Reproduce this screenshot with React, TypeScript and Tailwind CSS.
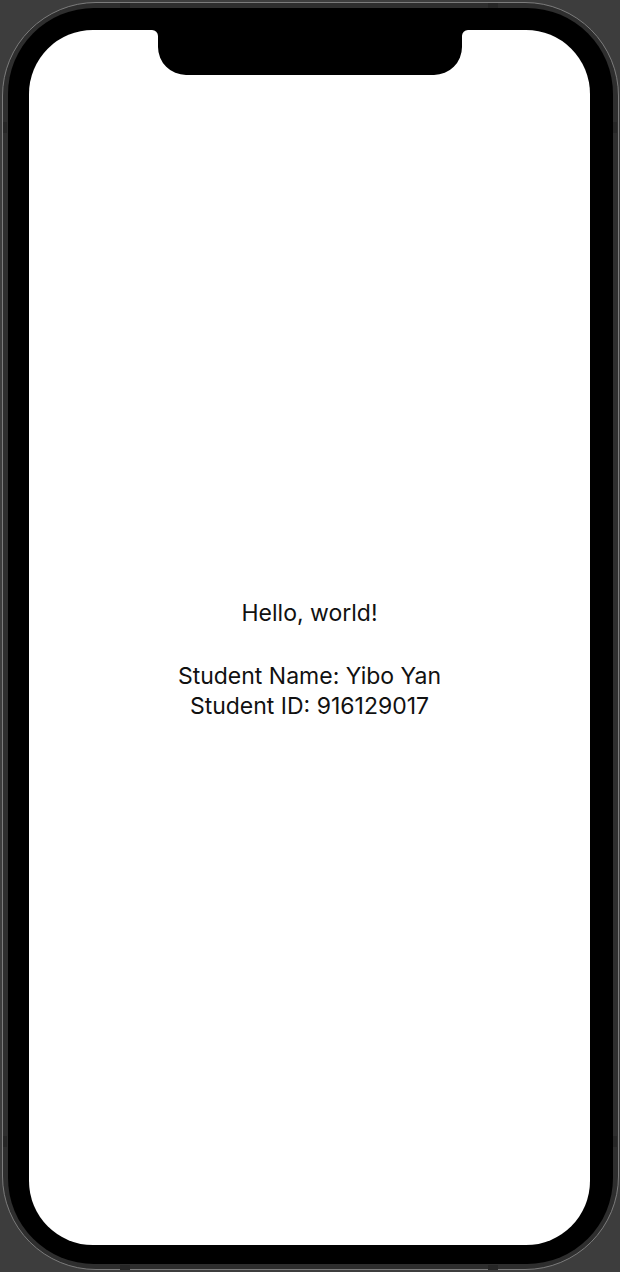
import React from "react";

// tiny darker marks on the steel rim (antenna bands)
const bands = [
  "left-[120px] top-[3px] w-[10px] h-[5px]",
  "left-[488px] top-[3px] w-[10px] h-[5px]",
  "left-[120px] top-[1265px] w-[10px] h-[5px]",
  "left-[488px] top-[1265px] w-[10px] h-[5px]",
  "left-[3px] top-[122px] w-[4px] h-[11px]",
  "left-[3px] top-[1136px] w-[4px] h-[11px]",
  "left-[613px] top-[122px] w-[4px] h-[11px]",
  "left-[613px] top-[1136px] w-[4px] h-[11px]",
];

function Notch() {
  return (
    <svg
      width="316"
      height="46"
      viewBox="0 0 316 46"
      className="absolute left-[123px] top-0"
    >
      <path
        d="M0 0 H316 A6 6 0 0 0 310 6 V17 A28 28 0 0 1 282 45 H34 A28 28 0 0 1 6 17 V6 A6 6 0 0 0 0 0 Z"
        fill="#000"
      />
    </svg>
  );
}

export default function App() {
  return (
    <div className="relative w-[620px] h-[1272px] bg-[#3d3d3d] pl-[2px] pt-[2px] pr-[1px] pb-[2px]">
      <div className="h-full rounded-[94px] border border-[#7c7c7c] bg-[#2e2e2e] p-[5px]">
        <div className="h-full rounded-[86px] bg-black pl-[21px] pt-[22px] pr-[23px] pb-[19px]">
          <div className="relative h-full rounded-[64px] bg-white">
            <Notch />
            <div
              className="flex flex-col items-center pt-[568px] text-[23px] leading-[30px] text-[#111]"
              style={{ fontFamily: "Inter, 'Liberation Sans', sans-serif" }}
            >
              <p>Hello, world!</p>
              <p className="mt-[33px]">Student Name: Yibo Yan</p>
              <p>Student ID: 916129017</p>
            </div>
          </div>
        </div>
      </div>
      {bands.map((b, i) => (
        <div key={i} className={`absolute bg-[#262626] ${b}`} />
      ))}
    </div>
  );
}
